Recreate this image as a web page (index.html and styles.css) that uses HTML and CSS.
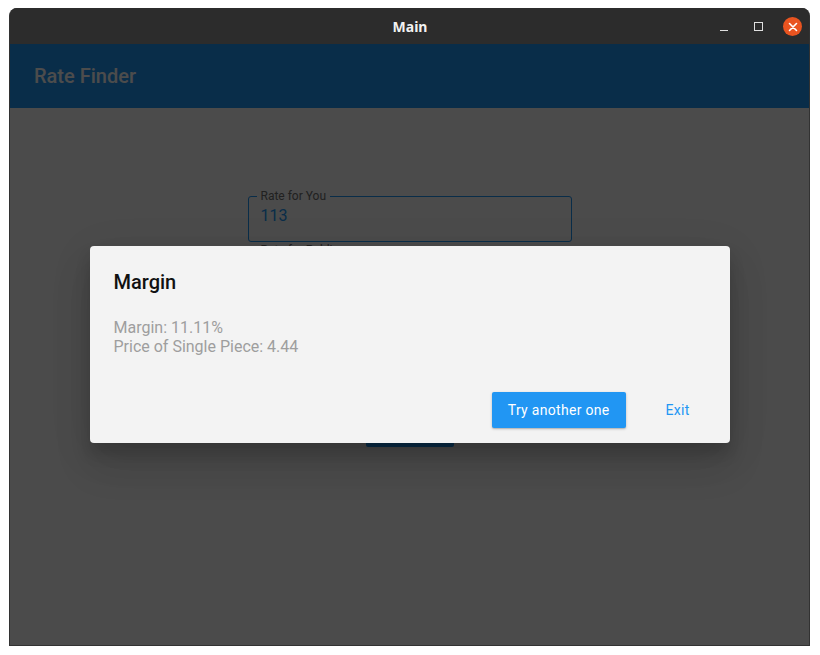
FILE: index.html
```html
<!DOCTYPE html>
<html lang="en">
<head>
<meta charset="utf-8">
<title>Main</title>
<link rel="stylesheet" href="styles.css">
</head>
<body>
<div class="window">
  <header class="titlebar">
    <span class="title">Main</span>
    <div class="controls">
      <span class="ctl-min"></span>
      <span class="ctl-max"></span>
      <span class="ctl-close">
        <svg width="10" height="10" viewBox="0 0 10 10"><path d="M1.5 1.5 L8.5 8.5 M8.5 1.5 L1.5 8.5" stroke="#fff" stroke-width="1.6" stroke-linecap="round"/></svg>
      </span>
    </div>
  </header>
  <div class="app">
    <div class="appbar">Rate Finder</div>
    <main class="content">
      <div class="field">
        <span class="field-label">Rate for You</span>
        <span class="field-value">113</span>
      </div>
      <div class="field field-second">
        <span class="field-label">Rate for Public</span>
        <span class="field-value"></span>
      </div>
      <button class="calc-btn">Calculate</button>
    </main>
    <div class="scrim">
      <div class="dialog">
        <h2 class="dialog-title">Margin</h2>
        <div class="dialog-body">
          <div>Margin: 11.11%</div>
          <div>Price of Single Piece: 4.44</div>
        </div>
        <div class="dialog-actions">
          <button class="btn-raised">Try another one</button>
          <button class="btn-flat">Exit</button>
        </div>
      </div>
    </div>
  </div>
</div>
</body>
</html>
```
FILE: styles.css
```css
* { box-sizing: border-box; }
html, body { margin: 0; padding: 0; background: #ffffff; }
body { font-family: Roboto, "Noto Sans", sans-serif; }

.window {
  margin: 8px 0 0 9px;
  width: 801px;
  height: 638px;
  display: flex;
  flex-direction: column;
  border-radius: 8px 8px 0 0;
  overflow: hidden;
  background: #2c2c2c;
  border: 1px solid #323232;
  border-top: none;
}

.titlebar {
  height: 36px;
  flex: none;
  background: #2c2c2c;
  position: relative;
  display: flex;
  align-items: center;
  justify-content: center;
}
.title {
  font-family: "Noto Sans", "DejaVu Sans", sans-serif;
  font-weight: 700;
  font-size: 14px;
  color: #f2f2f2;
  margin-left: 1px;
  margin-top: 1px;
}
.controls {
  position: absolute;
  right: 7px;
  top: 0;
  height: 36px;
  display: flex;
  align-items: center;
}
.ctl-min {
  width: 8px;
  height: 1px;
  background: #e0e0e0;
  margin-top: 9px;
  margin-right: 26px;
}
.ctl-max {
  width: 9px;
  height: 9px;
  border: 1px solid #e0e0e0;
  margin-top: 1px;
  margin-right: 20px;
}
.ctl-close {
  width: 19px;
  height: 19px;
  border-radius: 50%;
  background: #e95420;
  display: flex;
  align-items: center;
  justify-content: center;
  margin-top: 1px;
}
.ctl-close svg { display: block; }

.app {
  flex: 1;
  position: relative;
  display: flex;
  flex-direction: column;
  background: #fafafa;
}
.appbar {
  height: 64px;
  flex: none;
  background: #2196f3;
  color: #ffffff;
  font-weight: 500;
  font-size: 20px;
  padding-left: 24px;
  display: flex;
  align-items: center;
}
.content {
  flex: 1;
  display: flex;
  flex-direction: column;
  align-items: center;
  padding-top: 88px;
}
.field {
  position: relative;
  width: 324px;
  height: 46px;
  border: 1px solid #2196f3;
  border-radius: 3px;
  padding: 9px 12px 0;
}
.field-second { margin-top: 8px; border-color: #9e9e9e; }
.field-label {
  position: absolute;
  left: 8px;
  top: -8px;
  padding: 0 4px;
  background: #fafafa;
  font-size: 12px;
  line-height: 14px;
  color: #6e6e6e;
}
.field-value {
  font-size: 16px;
  line-height: 19px;
  color: #2196f3;
}
.calc-btn {
  margin-top: 115px;
  width: 88px;
  height: 36px;
  border: none;
  border-radius: 2px;
  background: #2196f3;
  color: #fff;
  font-family: Roboto, sans-serif;
  font-size: 14px;
}

.scrim {
  position: absolute;
  inset: 0;
  background: rgba(0, 0, 0, 0.7);
  display: flex;
  align-items: center;
  justify-content: center;
}
.dialog {
  width: 640px;
  height: 197px;
  background: #f3f3f3;
  border-radius: 4px;
  padding: 24px 0 0 24px;
  display: flex;
  flex-direction: column;
  box-shadow: 0 11px 15px rgba(0,0,0,0.14), 0 24px 38px rgba(0,0,0,0.1), 0 9px 46px rgba(0,0,0,0.08);
}
.dialog-title {
  margin: 0;
  font-size: 20px;
  font-weight: 500;
  line-height: normal;
  color: #111;
}
.dialog-body {
  margin-top: 24px;
  font-size: 16px;
  line-height: normal;
  color: #9e9e9e;
}
.dialog-actions {
  margin-top: 36px;
  display: flex;
  justify-content: flex-end;
  gap: 8px;
  padding-right: 8px;
}
.btn-raised, .btn-flat {
  height: 36px;
  min-width: 88px;
  border: none;
  border-radius: 2px;
  font-family: Roboto, sans-serif;
  font-size: 14px;
  font-weight: 400;
  letter-spacing: 0.3px;
  padding: 0 16px;
  cursor: pointer;
}
.btn-raised {
  background: #2196f3;
  color: #fff;
  box-shadow: 0 1px 3px rgba(0,0,0,0.2), 0 1px 1px rgba(0,0,0,0.12);
}
.btn-flat {
  background: transparent;
  color: #2196f3;
}
```
